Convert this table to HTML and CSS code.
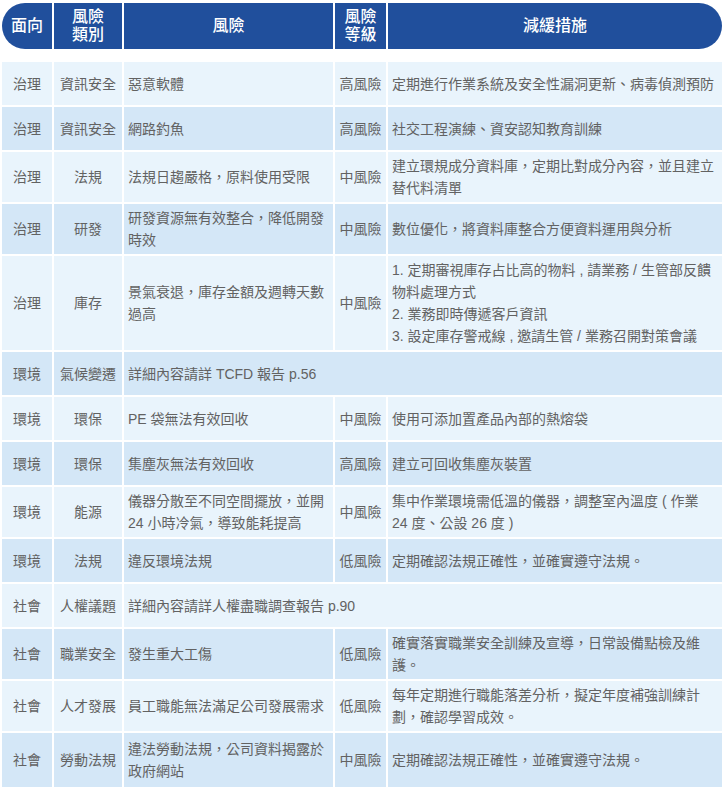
FILE: index.html
```html
<!DOCTYPE html>
<html lang="zh-Hant">
<head>
<meta charset="utf-8">
<title>風險與減緩措施</title>
<link rel="stylesheet" href="styles.css">
</head>
<body>
<table class="risk">
  <colgroup>
    <col class="c1"><col class="c2"><col class="c3"><col class="c4"><col class="c5">
  </colgroup>
  <thead>
    <tr class="head">
      <th class="h-first">面向</th>
      <th>風險<br>類別</th>
      <th>風險</th>
      <th>風險<br>等級</th>
      <th class="h-last">減緩措施</th>
    </tr>
  </thead>
  <tbody>
    <tr class="gap"><td colspan="5"></td></tr>
    <tr class="lt"><td class="ctr">治理</td><td class="ctr">資訊安全</td><td>惡意軟體</td><td class="ctr">高風險</td><td>定期進行作業系統及安全性漏洞更新、病毒偵測預防</td></tr>
    <tr class="dk"><td class="ctr">治理</td><td class="ctr">資訊安全</td><td>網路釣魚</td><td class="ctr">高風險</td><td>社交工程演練、資安認知教育訓練</td></tr>
    <tr class="lt"><td class="ctr">治理</td><td class="ctr">法規</td><td>法規日趨嚴格，原料使用受限</td><td class="ctr">中風險</td><td>建立環規成分資料庫，定期比對成分內容，並且建立替代料清單</td></tr>
    <tr class="dk"><td class="ctr">治理</td><td class="ctr">研發</td><td>研發資源無有效整合，降低開發時效</td><td class="ctr">中風險</td><td>數位優化，將資料庫整合方便資料運用與分析</td></tr>
    <tr class="lt"><td class="ctr">治理</td><td class="ctr">庫存</td><td>景氣衰退，庫存金額及週轉天數過高</td><td class="ctr">中風險</td><td>1. 定期審視庫存占比高的物料 , 請業務 / 生管部反饋物料處理方式<br>2. 業務即時傳遞客戶資訊<br>3. 設定庫存警戒線 , 邀請生管 / 業務召開對策會議</td></tr>
    <tr class="dk"><td class="ctr">環境</td><td class="ctr">氣候變遷</td><td colspan="3">詳細內容請詳 TCFD 報告 p.56</td></tr>
    <tr class="lt"><td class="ctr">環境</td><td class="ctr">環保</td><td>PE 袋無法有效回收</td><td class="ctr">中風險</td><td>使用可添加置產品內部的熱熔袋</td></tr>
    <tr class="dk"><td class="ctr">環境</td><td class="ctr">環保</td><td>集塵灰無法有效回收</td><td class="ctr">高風險</td><td>建立可回收集塵灰裝置</td></tr>
    <tr class="lt"><td class="ctr">環境</td><td class="ctr">能源</td><td>儀器分散至不同空間擺放，並開 24 小時冷氣，導致能耗提高</td><td class="ctr">中風險</td><td>集中作業環境需低溫的儀器，調整室內溫度 ( 作業 <span class="nw">24 度</span>、公設 26 度 )</td></tr>
    <tr class="dk"><td class="ctr">環境</td><td class="ctr">法規</td><td>違反環境法規</td><td class="ctr">低風險</td><td>定期確認法規正確性，並確實遵守法規。</td></tr>
    <tr class="lt"><td class="ctr">社會</td><td class="ctr">人權議題</td><td colspan="3">詳細內容請詳人權盡職調查報告 p.90</td></tr>
    <tr class="dk"><td class="ctr">社會</td><td class="ctr">職業安全</td><td>發生重大工傷</td><td class="ctr">低風險</td><td>確實落實職業安全訓練及宣導，日常設備點檢及維護。</td></tr>
    <tr class="lt"><td class="ctr">社會</td><td class="ctr">人才發展</td><td>員工職能無法滿足公司發展需求</td><td class="ctr">低風險</td><td>每年定期進行職能落差分析，擬定年度補強訓練計劃，確認學習成效。</td></tr>
    <tr class="dk tall"><td class="ctr">社會</td><td class="ctr">勞動法規</td><td>違法勞動法規，公司資料揭露於政府網站</td><td class="ctr">中風險</td><td>定期確認法規正確性，並確實遵守法規。</td></tr>
  </tbody>
</table>
</body>
</html>
```

FILE: styles.css
```css
html, body {
  margin: 0;
  padding: 0;
  background: #ffffff;
}

.risk {
  margin-top: 1px;
  width: 724px;
  table-layout: fixed;
  border-collapse: separate;
  border-spacing: 2px;
  font-family: "Liberation Sans", "Noto Sans CJK TC", sans-serif;
  font-size: 14px;
  line-height: 22px;
  color: #626262;
}

.c1 { width: 50px; }
.c2 { width: 68px; }
.c3 { width: 209px; }
.c4 { width: 51px; }
.c5 { width: 334px; }

.head {
  height: 46px;
}

.head th {
  background: #204f9c;
  color: #ffffff;
  font-weight: 500;
  font-size: 16px;
  line-height: 18px;
  padding: 0;
  text-align: center;
  vertical-align: middle;
}

.head .h-first {
  border-radius: 23px 0 0 23px;
}

.head .h-last {
  border-radius: 0 23px 23px 0;
}

tbody tr {
  height: 43px;
}

tbody tr.gap {
  height: 9px;
}

tbody tr.gap td {
  height: 9px;
  padding: 0;
  line-height: 0;
  background: transparent;
}

tbody td {
  padding: 3px 3px 3px 4px;
  vertical-align: middle;
  text-align: left;
}

tbody td.ctr {
  text-align: center;
  padding-left: 0;
  padding-right: 0;
}

.nw {
  white-space: nowrap;
}

.lt td {
  background: #e9f4fc;
}

.dk td {
  background: #d4e7f7;
}

tbody tr.tall {
  height: 54px;
}
```
